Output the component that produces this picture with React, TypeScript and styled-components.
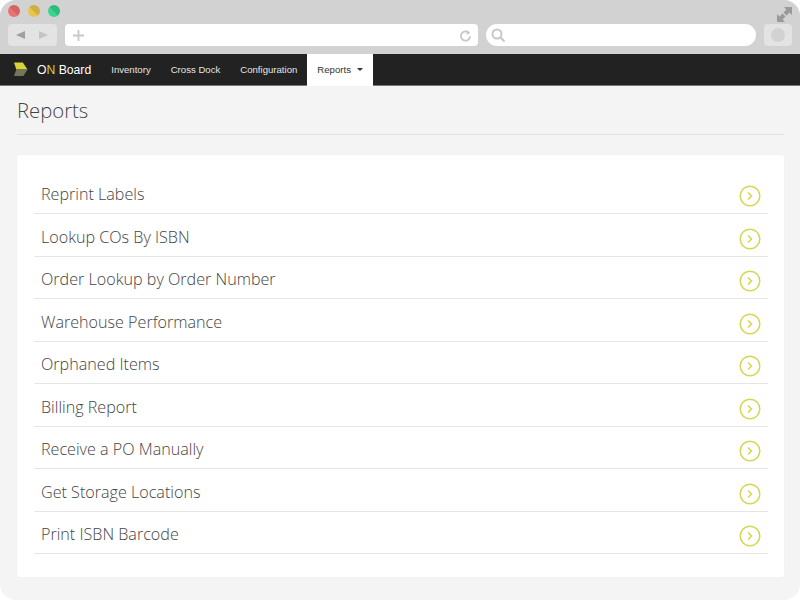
import styled, { createGlobalStyle } from 'styled-components'

const GlobalStyle = createGlobalStyle`
  html, body {
    margin: 0;
    padding: 0;
    background: #fff;
  }
  * {
    box-sizing: border-box;
  }
`

const Window = styled.div`
  width: 800px;
  height: 600px;
  border-radius: 16px;
  overflow: hidden;
  display: flex;
  flex-direction: column;
  background: #f4f4f4;
  font-family: "Open Sans", sans-serif;
`

const Chrome = styled.div`
  height: 54px;
  background: #d2d2d2;
  padding: 5px 8px 0;
  display: flex;
  flex-direction: column;
  flex-shrink: 0;
`

const TitleRow = styled.div`
  height: 19px;
  display: flex;
  align-items: flex-start;
  justify-content: space-between;
`

const Lights = styled.div`
  display: flex;
  gap: 8px;
`

const Light = styled.span<{ $left: string; $right: string }>`
  width: 12px;
  height: 12px;
  border-radius: 50%;
  background: linear-gradient(45deg, ${p => p.$left} 50%, ${p => p.$right} 50%);
`

const Expand = styled.svg`
  width: 15px;
  height: 15px;
  margin: 2px 0 0 0;
  fill: #999;
`

const ToolRow = styled.div`
  height: 22px;
  display: flex;
  gap: 8px;
`

const NavButtons = styled.div`
  width: 49px;
  border-radius: 4px;
  background: #e3e3e3;
  display: flex;
  align-items: center;
  padding-left: 8px;
  gap: 14px;
`

const Triangle = styled.span<{ $dir: 'left' | 'right'; $color: string }>`
  width: 0;
  height: 0;
  border-top: 4.5px solid transparent;
  border-bottom: 4.5px solid transparent;
  ${p => (p.$dir === 'left' ? `border-right: 9px solid ${p.$color};` : `border-left: 9px solid ${p.$color};`)}
`

const AddressBar = styled.div`
  width: 413px;
  border-radius: 4px;
  background: #fff;
  display: flex;
  align-items: center;
  justify-content: space-between;
  padding: 0 6px 0 8px;
`

const SearchBar = styled.div`
  width: 270px;
  border-radius: 11px;
  background: #fff;
  display: flex;
  align-items: center;
  padding-left: 5px;
`

const SquareButton = styled.div`
  width: 28px;
  border-radius: 4px;
  background: #e3e3e3;
  display: flex;
  align-items: center;
  justify-content: center;
`

const Dot = styled.span`
  width: 14px;
  height: 14px;
  border-radius: 50%;
  background: #d2d2d2;
`

const GrayIcon = styled.svg<{ $size?: number }>`
  width: ${p => p.$size ?? 14}px;
  height: ${p => p.$size ?? 14}px;
  fill: none;
  stroke: #c8c8c8;
  stroke-width: 2;
`

const Navbar = styled.nav`
  height: 32px;
  background: #222;
  box-shadow: inset 0 -1px 0 #777;
  display: flex;
  align-items: stretch;
  padding-left: 14px;
  flex-shrink: 0;
`

const Logo = styled.svg`
  width: 14px;
  height: 15px;
  margin-top: 8px;
`

const Brand = styled.div`
  margin: 0 10px 0 9px;
  font-family: "Liberation Sans", Arial, sans-serif;
  font-size: 12.2px;
  line-height: 32px;
  color: #fff;
  white-space: nowrap;
`

const BrandAccent = styled.span`
  color: #d4d43a;
`

const NavItem = styled.a<{ $active?: boolean }>`
  display: flex;
  align-items: center;
  gap: 5px;
  padding: 0 10px 2px;
  font-family: "Liberation Sans", Arial, sans-serif;
  font-size: 9.6px;
  color: ${p => (p.$active ? '#333' : '#e4e4e4')};
  background: ${p => (p.$active ? '#fff' : 'transparent')};
`

const Caret = styled.span`
  width: 0;
  height: 0;
  border-top: 3px solid #333;
  border-left: 3px solid transparent;
  border-right: 3px solid transparent;
  margin-left: 1px;
`

const Page = styled.main`
  flex: 1;
  padding: 0 16px 23px 17px;
  display: flex;
  flex-direction: column;
`

const Heading = styled.h1`
  margin: 0 0 20px;
  height: 49px;
  padding-top: 10px;
  border-bottom: 1px solid #e2e2e2;
  font-size: 20.3px;
  line-height: 28px;
  font-weight: 300;
  color: #444;
`

const Card = styled.section`
  flex: 1;
  background: #fff;
  border-radius: 2px;
  box-shadow: 0 0 1px rgba(0, 0, 0, 0.08);
  padding: 16.5px 16px 0 17px;
`

const ReportList = styled.ul`
  list-style: none;
  margin: 0;
  padding: 0;
`

const ReportRow = styled.li`
  height: 42.5px;
  border-bottom: 1px solid #e6e6e6;
  padding: 4px 7px 0;
  display: flex;
  align-items: center;
  justify-content: space-between;
`

const ReportName = styled.span`
  font-size: 16.14px;
  font-weight: 300;
  color: #444;
`

const Chevron = styled.svg`
  width: 22px;
  height: 22px;
  margin-top: 4px;
  fill: none;
  stroke: #d6d653;
`

const reports = [
  'Reprint Labels',
  'Lookup COs By ISBN',
  'Order Lookup by Order Number',
  'Warehouse Performance',
  'Orphaned Items',
  'Billing Report',
  'Receive a PO Manually',
  'Get Storage Locations',
  'Print ISBN Barcode',
]

export default function App() {
  return (
    <>
      <GlobalStyle />
      <Window>
        <Chrome>
          <TitleRow>
            <Lights>
              <Light $left="#ea7272" $right="#d26464" />
              <Light $left="#e6c44e" $right="#cfae44" />
              <Light $left="#3ad490" $right="#2cbc7c" />
            </Lights>
            <Expand viewBox="0 0 15 15">
              <path d="M7 0h8v8l-2.500-2.500-3 3-3-3 3-3z" />
              <path d="M0 7v8h8l-2.500-2.500 3-3-3-3-3 3z" />
            </Expand>
          </TitleRow>
          <ToolRow>
            <NavButtons>
              <Triangle $dir="left" $color="#a0a0a0" />
              <Triangle $dir="right" $color="#c4c4c4" />
            </NavButtons>
            <AddressBar>
              <GrayIcon viewBox="0 0 12 12" $size={11}>
                <path d="M6 0v12M0 6h12" />
              </GrayIcon>
              <GrayIcon viewBox="0 0 14 14" $size={13}>
                <path d="M11 4.500A5 5 0 1 0 12 8" />
                <path d="M8 1l4 3-3.500 2.500z" fill="#c8c8c8" stroke="none" />
              </GrayIcon>
            </AddressBar>
            <SearchBar>
              <GrayIcon viewBox="0 0 14 14">
                <circle cx="6" cy="6" r="4.500" />
                <path d="M9.500 9.500l4 4" />
              </GrayIcon>
            </SearchBar>
            <SquareButton>
              <Dot />
            </SquareButton>
          </ToolRow>
        </Chrome>
        <Navbar>
          <Logo viewBox="0 0 15 15">
            <path d="M0 0h9.500l5 7.500H2.500z" fill="#d4d43a" />
            <path d="M2.500 7.500h12l-4.500 7H0z" fill="#74755a" />
          </Logo>
          <Brand>
            O<BrandAccent>N</BrandAccent> Board
          </Brand>
          <NavItem>Inventory</NavItem>
          <NavItem>Cross Dock</NavItem>
          <NavItem>Configuration</NavItem>
          <NavItem $active>
            Reports <Caret />
          </NavItem>
        </Navbar>
        <Page>
          <Heading>Reports</Heading>
          <Card>
            <ReportList>
              {reports.map(name => (
                <ReportRow key={name}>
                  <ReportName>{name}</ReportName>
                  <Chevron viewBox="0 0 22 22">
                    <circle cx="11" cy="11" r="9.800" strokeWidth="1.500" />
                    <path d="M9 7.500l3.500 3.500-3.500 3.500" strokeWidth="1.600" />
                  </Chevron>
                </ReportRow>
              ))}
            </ReportList>
          </Card>
        </Page>
      </Window>
    </>
  )
}
